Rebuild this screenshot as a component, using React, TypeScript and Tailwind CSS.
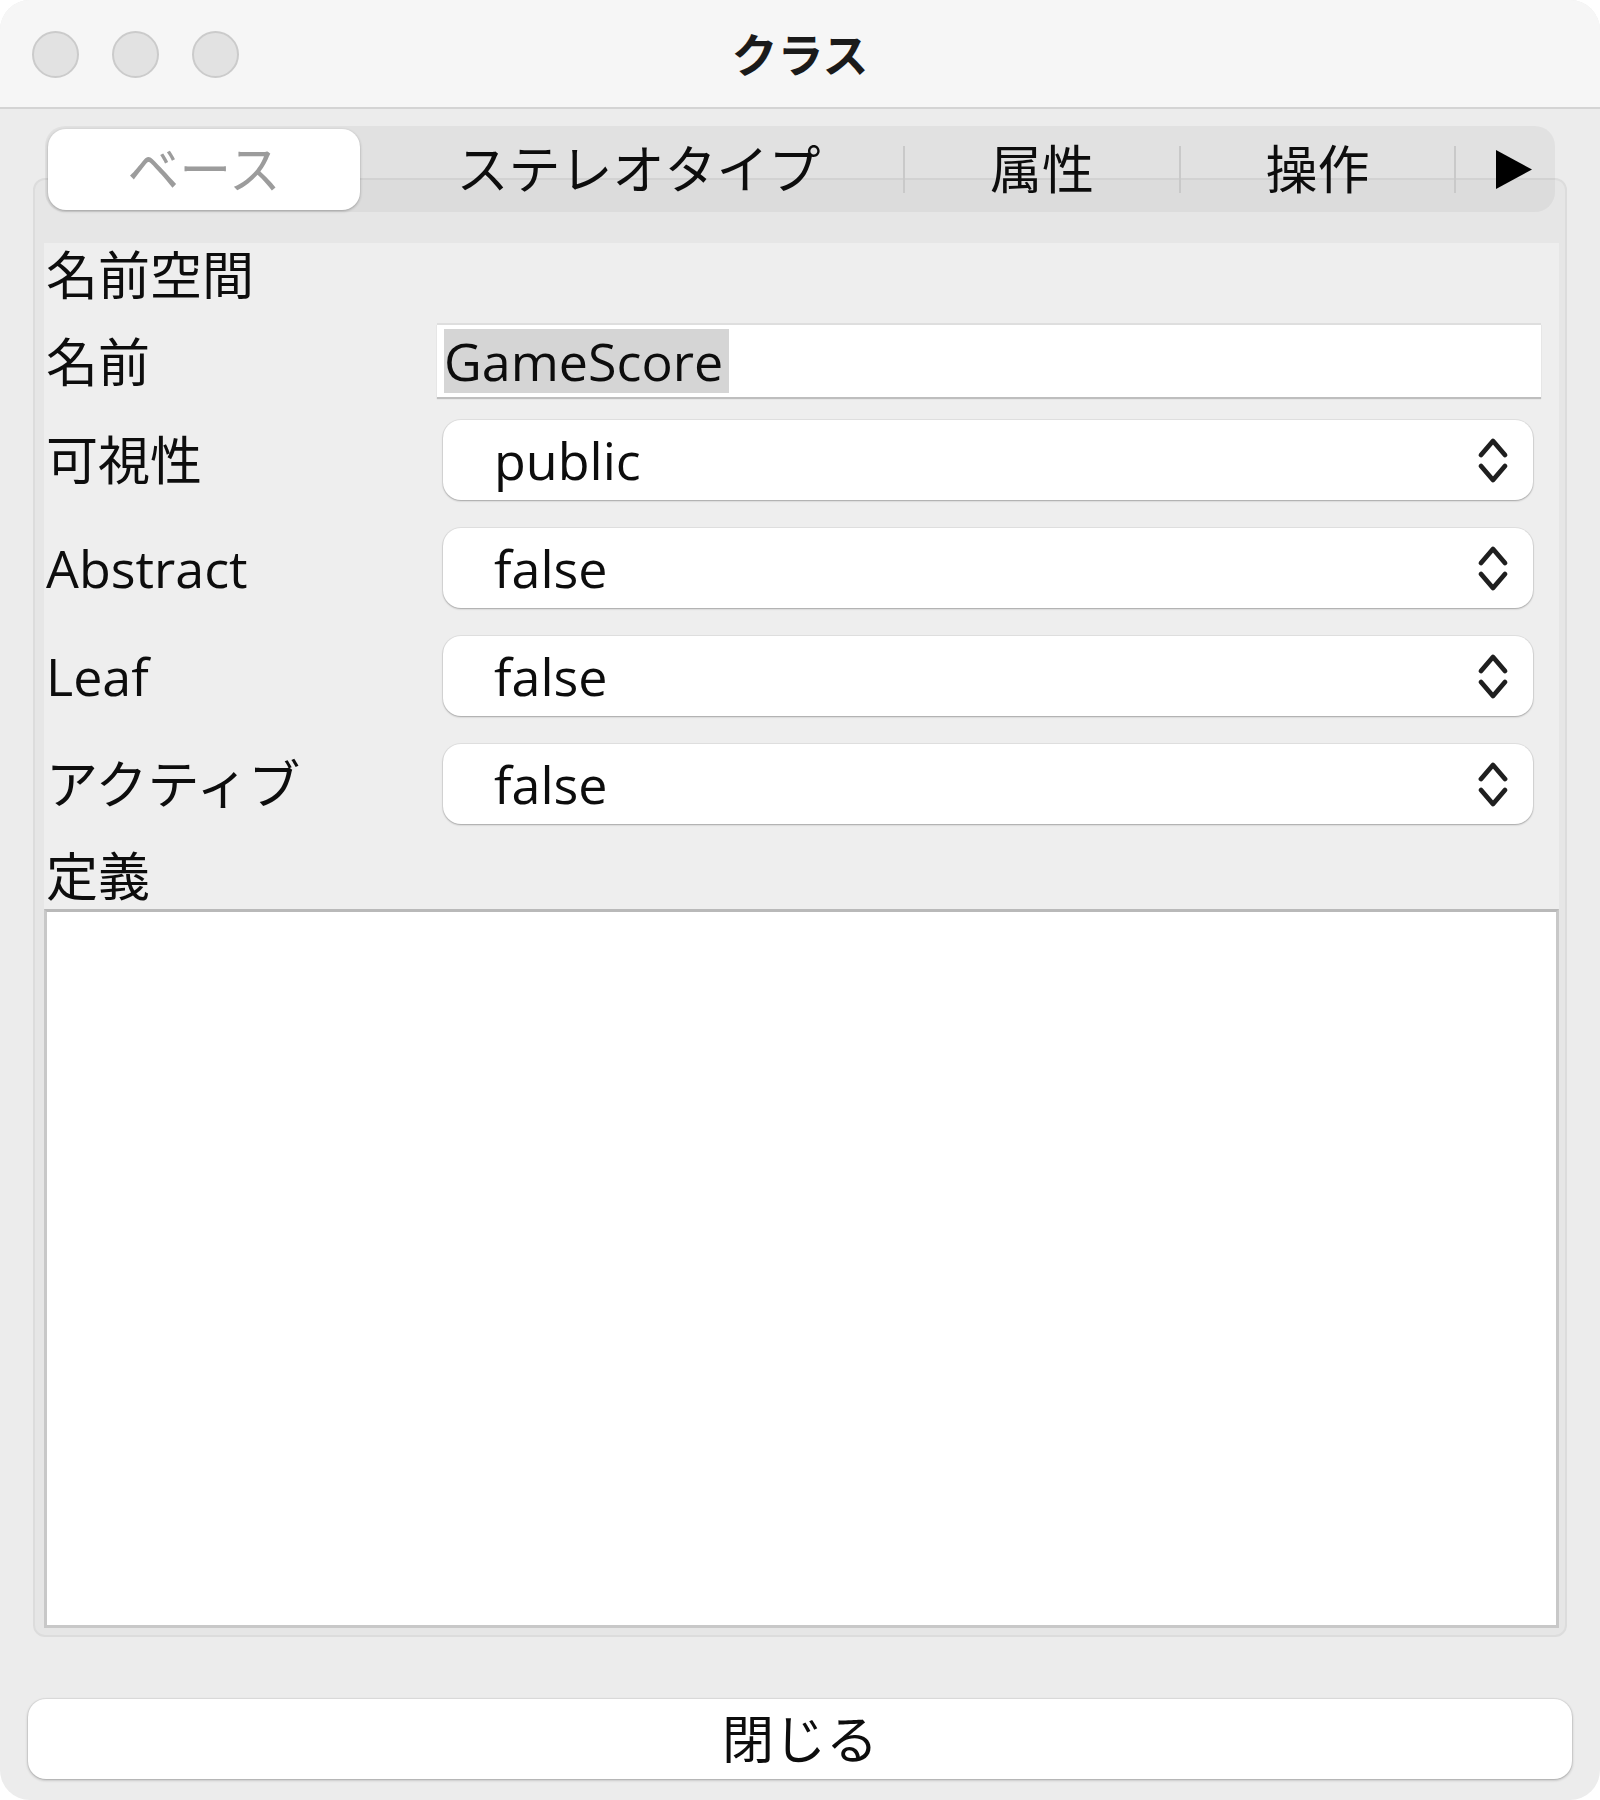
import React from "react";

const FONT = "font-['Open_Sans','Noto_Sans_CJK_JP',sans-serif]";

function Chevrons() {
  return (
    <svg width="32" height="48" viewBox="0 0 32 48" fill="none" stroke="#1f1f1f" strokeWidth="4.8" strokeLinecap="round" strokeLinejoin="round">
      <path d="M4 19 L16 5 L28 19" />
      <path d="M4 30 L16 44 L28 30" />
    </svg>
  );
}

function Combo({ value }: { value: string }) {
  return (
    <div className="ml-[6px] flex h-[80px] w-[1090px] items-center justify-between rounded-[18px] bg-white pl-[51px] pr-[24px] shadow-[0_1px_2px_rgba(0,0,0,0.28),0_0_0_1px_rgba(0,0,0,0.05)]">
      <span className="text-[52px] font-medium leading-none text-[#0d0d0d]">{value}</span>
      <Chevrons />
    </div>
  );
}

function Label({ children, latin }: { children: React.ReactNode; latin?: boolean }) {
  return (
    <div className={`w-[393px] shrink-0 pl-[2px] text-[52px] leading-none text-[#0d0d0d] ${latin ? "font-medium" : ""}`}>
      {children}
    </div>
  );
}

function Sep() {
  return <div className="h-[47px] w-[2px] shrink-0 bg-[#c9c9c9]" />;
}

export default function App() {
  return (
    <div className={`h-[1800px] w-[1600px] bg-white ${FONT}`}>
      <div className="flex h-full w-full flex-col overflow-hidden rounded-[30px] bg-[#ececec]">
        {/* Title bar */}
        <div className="grid h-[109px] shrink-0 grid-cols-[1fr_auto_1fr] items-center border-b-2 border-[#d4d4d4] bg-[#f6f6f6]">
          <div className="flex items-center gap-[33px] pl-[32px] pt-[2px]">
            <div className="h-[47px] w-[47px] rounded-full border-2 border-[#cbcbcb] bg-[#e2e2e2]" />
            <div className="h-[47px] w-[47px] rounded-full border-2 border-[#cbcbcb] bg-[#e2e2e2]" />
            <div className="h-[47px] w-[47px] rounded-full border-2 border-[#cbcbcb] bg-[#e2e2e2]" />
          </div>
          <div className="text-[46px] font-bold leading-none text-[#1a1a1a]">クラス</div>
          <div />
        </div>

        {/* Tab bar */}
        <div className="relative z-10 ml-[45px] mt-[17px] flex h-[86px] w-[1510px] shrink-0 items-center rounded-[20px] bg-[rgba(0,0,0,0.045)]">
          <div className="ml-[3px] flex h-[81px] w-[312px] shrink-0 items-center justify-center rounded-[18px] bg-white text-[52px] leading-none text-[#9c9c9c] shadow-[0_1px_3px_rgba(0,0,0,0.3)]">
            ベース
          </div>
          <div className="flex w-[543px] shrink-0 items-center justify-center pl-[14px] text-[52px] leading-none text-[#0d0d0d]">ステレオタイプ</div>
          <Sep />
          <div className="flex w-[274px] shrink-0 items-center justify-center text-[52px] leading-none text-[#0d0d0d]">属性</div>
          <Sep />
          <div className="flex w-[273px] shrink-0 items-center justify-center text-[52px] leading-none text-[#0d0d0d]">操作</div>
          <Sep />
          <div className="flex flex-1 items-center pl-[40px]">
            <svg width="36" height="39" viewBox="0 0 36 39">
              <polygon points="0,0 36,19.5 0,39" fill="#000" />
            </svg>
          </div>
        </div>

        {/* Panel */}
        <div className="mx-[33px] -mt-[34px] shrink-0 rounded-[12px] border-2 border-[#dcdcdc] bg-[#e6e6e6] pb-[7px] pl-[9px] pr-[6px] pt-[63px]">
          <div className="flex flex-col bg-[#eeeeee]">
            <div className="flex h-[64px] items-center">
              <Label>名前空間</Label>
            </div>
            <div className="mt-[16px] flex h-[74px] items-center">
              <Label>
                <span className="relative top-[2px]">名前</span>
              </Label>
              <div className="flex h-[74px] w-[1104px] items-center border-t-2 border-[#dedede] bg-white pl-[7px] shadow-[0_2px_1px_rgba(0,0,0,0.2)]">
                <span className="flex h-[64px] items-center bg-[#d5d5d5] pr-[6px] text-[52px] font-medium leading-none text-[#0d0d0d]">GameScore</span>
              </div>
            </div>
            <div className="mt-[23px] flex items-center">
              <Label>可視性</Label>
              <Combo value="public" />
            </div>
            <div className="mt-[28px] flex items-center">
              <Label latin>Abstract</Label>
              <Combo value="false" />
            </div>
            <div className="mt-[28px] flex items-center">
              <Label latin>Leaf</Label>
              <Combo value="false" />
            </div>
            <div className="mt-[28px] flex items-center">
              <Label>アクティブ</Label>
              <Combo value="false" />
            </div>
            <div className="mt-[22px] flex h-[60px] items-center">
              <Label>定義</Label>
            </div>
            <div className="mt-[3px] h-[719px] border-[3px] border-[#c8c8c8] border-t-[#b9b9b9] bg-white" />
          </div>
        </div>

        {/* Close button */}
        <div className="mx-[28px] mt-[62px] flex h-[80px] shrink-0 items-center justify-center rounded-[18px] bg-white text-[52px] leading-none text-[#0d0d0d] shadow-[0_1px_3px_rgba(0,0,0,0.3),0_0_0_1px_rgba(0,0,0,0.04)]">
          閉じる
        </div>
      </div>
    </div>
  );
}
